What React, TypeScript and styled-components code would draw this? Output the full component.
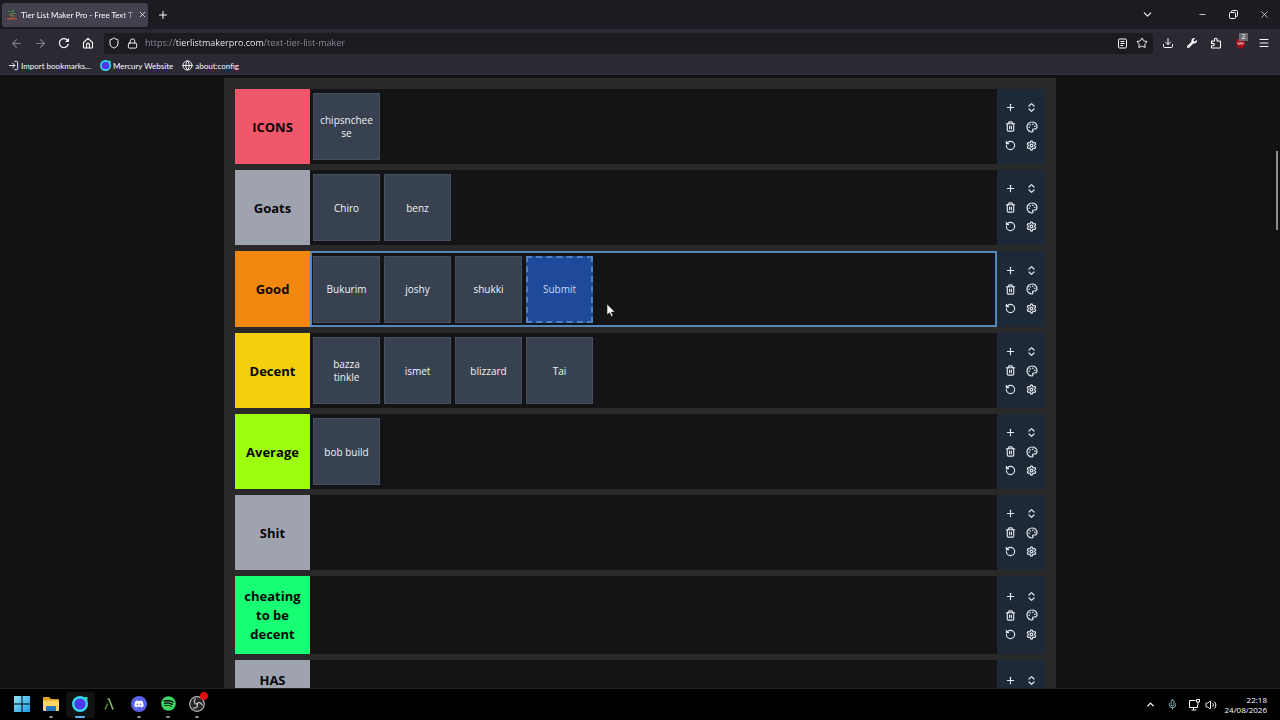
import React from "react";
import styled, { createGlobalStyle, css } from "styled-components";
import {
  ArrowLeft, ArrowRight, ChevronDown, ChevronUp, Download, Globe, LogIn, Lock, Menu,
  Mic, Minus, Palette, Plus, RotateCcw, Settings, Shield, Star, Trash2, Volume2, X,
} from "lucide-react";
import { FaDiscord, FaSpotify, FaWrench } from "react-icons/fa";

const pageFont = `"Open Sans", "Noto Sans", sans-serif`;
const chromeFont = `Lato, "Open Sans", sans-serif`;

const GlobalStyle = createGlobalStyle`
  * { box-sizing: border-box; }
  body { margin: 0; background: #111112; font-family: ${pageFont}; color: #fbfbfe; }
  button { font: inherit; color: inherit; background: none; border: 0; padding: 0; cursor: pointer; }
  svg { display: block; flex: none; }
`;

const Desktop = styled.div`
  height: 100vh;
  display: flex;
  flex-direction: column;
  overflow: hidden;
`;

const TabBar = styled.header`
  display: flex;
  align-items: center;
  height: 29px;
  padding-left: 2px;
  background: #1c1b22;
  flex: none;
`;

const Tab = styled.div`
  display: flex;
  align-items: center;
  gap: 4px;
  width: 146px;
  height: 24px;
  padding: 0 4px 0 5px;
  background: #42414d;
  border-radius: 3px;
`;

const TabTitle = styled.span`
  flex: 1;
  white-space: nowrap;
  font-family: ${chromeFont};
  font-size: 8px;
  line-height: 14px;
  mask-image: linear-gradient(90deg, #000 90%, transparent 106%);
`;

const IconButton = styled.button<{ $w?: number; $dim?: boolean }>`
  position: relative;
  display: flex;
  align-items: center;
  justify-content: center;
  width: ${(p) => p.$w ?? 24}px;
  height: 20px;
  flex: none;
  opacity: ${(p) => (p.$dim ? 0.4 : 1)};
`;

const WindowActions = styled.div`
  display: flex;
  margin-left: auto;
`;

const WindowButtons = styled.div`
  display: flex;
  margin-left: 25px;
`;

const NavBar = styled.nav`
  display: flex;
  align-items: center;
  height: 28px;
  padding: 0 4px;
  background: #2b2a33;
  flex: none;
`;

const AddressField = styled.label`
  flex: 1;
  min-width: 0;
  display: flex;
  align-items: center;
  gap: 7px;
  height: 21px;
  margin: 0 3px 0 4px;
  padding: 0 0 0 4px;
  background: #1c1b22;
  border-radius: 3px;
`;

const AddressInput = styled.input`
  flex: 1;
  min-width: 0;
  border: 0;
  outline: 0;
  padding: 0;
  font-family: ${pageFont};
  font-size: 9px;
  line-height: 16px;
  color: transparent;
  background: linear-gradient(90deg, #8f8f98 30px, #fbfbfe 30px 119px, #8f8f98 119px);
  background-clip: text;
  -webkit-background-clip: text;
`;

const FieldButtons = styled.div`
  display: flex;
`;

const Bookmarks = styled.div`
  display: flex;
  align-items: center;
  gap: 9px;
  height: 18px;
  padding: 0 8px;
  background: #2b2a33;
  border-bottom: 1px solid #33323c;
  flex: none;
`;

const Bookmark = styled.a`
  display: flex;
  align-items: center;
  gap: 2px;
  color: #fbfbfe;
  text-decoration: none;
  font-family: ${chromeFont};
  font-size: 8px;
  line-height: 14px;
`;

const Badge = styled.span`
  position: absolute;
  top: 0;
  right: 4px;
  width: 9px;
  height: 8px;
  background: #6c6c72;
  font-size: 7px;
  line-height: 8px;
`;

const Viewport = styled.main`
  position: relative;
  flex: 1;
  min-height: 0;
  overflow: hidden;
  padding-top: 3px;
  background: #111112;
`;

const ScrollThumb = styled.div`
  position: absolute;
  top: 76px;
  right: 2px;
  width: 2px;
  height: 79px;
  background: #8c8c8e;
`;

const Board = styled.section`
  display: flex;
  flex-direction: column;
  gap: 6px;
  max-width: 832px;
  margin: 0 auto;
  padding: 11px;
  background: #29292a;
`;

const TierRow = styled.div<{ $active?: boolean; $tall?: boolean }>`
  display: grid;
  grid-template-columns: 75px 1fr 48px;
  min-height: ${(p) => (p.$tall ? 78 : p.$active ? 76 : 75)}px;
`;

const TierLabel = styled.h2<{ $color: string; $top?: boolean }>`
  display: flex;
  align-items: ${(p) => (p.$top ? "flex-start" : "center")};
  justify-content: center;
  margin: 0;
  padding: 11px 8px 10px;
  background: ${(p) => p.$color};
  color: #060607;
  font-size: 13px;
  font-weight: 700;
  line-height: 19px;
  text-align: center;
`;

const DropZone = styled.div<{ $active?: boolean }>`
  display: flex;
  flex-wrap: wrap;
  align-content: center;
  gap: 4px;
  padding: 0 3px;
  background: #141416;
  ${(p) => p.$active && css`box-shadow: inset 0 0 0 2px #5488bd;`}
`;

const Tile = styled.div<{ $dragging?: boolean }>`
  position: relative;
  display: flex;
  align-items: center;
  justify-content: center;
  width: 67px;
  height: 67px;
  padding: 1px 6px 0;
  border: 1px solid #454f5d;
  background: #38414f;
  color: #f1f3f6;
  font-size: 10px;
  line-height: 13px;
  text-align: center;
  word-break: break-word;
  ${(p) => p.$dragging && css`
    border: 2px dashed #4f83c0;
    background: #1f499b;
    color: #c8d6ee;
  `}
`;

const Controls = styled.div`
  display: grid;
  grid-template-columns: 21px 21px;
  grid-auto-rows: 19px;
  align-content: center;
  padding-left: 3px;
  background: #1e2938;
  color: #e5e9ef;
`;

const ControlButton = styled.button`
  display: flex;
  align-items: center;
  justify-content: center;
`;

const Pointer = styled.svg`
  position: absolute;
  left: 78px;
  top: 45px;
`;

const Taskbar = styled.footer`
  display: flex;
  align-items: center;
  height: 32px;
  padding: 0 13px 0 7px;
  background: #000;
  border-top: 1px solid #202020;
  flex: none;
`;

const Apps = styled.div`
  display: grid;
  grid-template-columns: repeat(7, 1fr);
  width: 205px;
`;

const TaskButton = styled.button<{ $state?: "open" | "active" }>`
  position: relative;
  display: flex;
  align-items: center;
  justify-content: center;
  height: 26px;
  padding-bottom: 2px;
  border-radius: 3px;
  background: ${(p) => (p.$state === "active" ? "#101214" : "transparent")};
  &::after {
    content: "";
    position: absolute;
    bottom: 0;
    left: calc(50% - ${(p) => (p.$state === "active" ? 5 : 2)}px);
    width: ${(p) => (p.$state === "active" ? 10 : 4)}px;
    height: 2px;
    border-radius: 1px;
    background: ${(p) => (!p.$state ? "transparent" : p.$state === "active" ? "#5cb8e8" : "#8b8b8b")};
  }
`;

const RecordDot = styled.span`
  position: absolute;
  top: 0;
  right: 4px;
  width: 8px;
  height: 8px;
  border-radius: 50%;
  background: #e00b0b;
`;

const Tray = styled.div`
  display: flex;
  align-items: center;
  margin-left: auto;
`;

const Clock = styled.time`
  margin-left: 7px;
  font-size: 8px;
  line-height: 10px;
  text-align: right;
`;

const MercuryLogo = ({ size }: { size: number }) => (
  <svg width={size} height={size} viewBox="0 0 16 16">
    <circle cx="8" cy="8" r="8" fill="#35d6ee" />
    <path d="M12 1h3.500v4z" fill="#23e2b4" />
    <circle cx="8" cy="8" r="5.600" fill="#5038ea" />
  </svg>
);

const SiteIcon = () => (
  <svg width="10" height="10" viewBox="0 0 10 10">
    <path d="M1 1h3v1H1zM5 0h2v2H5zM3 3h6v1H3z" fill="#3a8a4c" />
    <path d="M2 4.500h4v1H2zM5 5.500h3v1H5z" fill="#9a7437" />
    <path d="M0 8h3l1-1 2 1h4v1.500H0z" fill="#b0502f" />
  </svg>
);

const Reload = () => (
  <svg width="12" height="12" viewBox="0 0 12 12" fill="none" stroke="currentColor" strokeWidth="1.200">
    <path d="M10.300 7A4.500 4.500 0 1 1 9 2.800L10.500 4.300" />
    <path d="M11 1v4H7z" fill="currentColor" stroke="none" />
  </svg>
);

const Home = () => (
  <svg width="12" height="12" viewBox="0 0 12 12" fill="none" stroke="currentColor" strokeWidth="1.100" strokeLinejoin="round">
    <path d="M1.500 5.500 6 1.300l4.500 4.200v4.700a.8.8 0 0 1-.8.800H2.300a.8.800 0 0 1-.8-.8z" />
    <path d="M4.600 11V7.500a1.400 1.400 0 0 1 2.800 0V11" />
  </svg>
);

const Reader = () => (
  <svg width="11" height="11" viewBox="0 0 11 11" fill="none" stroke="currentColor">
    <rect x="1.500" y="1" width="8" height="9" rx="1.200" />
    <path d="M3.500 3.500h4M3.500 5.500h4M3.500 7.500h2.500" />
  </svg>
);

const Puzzle = () => (
  <svg width="12" height="12" viewBox="0 0 12 12" fill="none" stroke="currentColor" strokeWidth="1.100" strokeLinejoin="round">
    <path d="M1.500 4h3V2.500a1.300 1.300 0 0 1 2.600 0V4h2.900a.5.500 0 0 1 .5.500V10.500a.5.500 0 0 1-.5.500H2a.5.500 0 0 1-.5-.5V8.800h1.600a1.200 1.200 0 0 0 0-2.400H1.500z" />
  </svg>
);

const UBlock = () => (
  <svg width="11" height="11" viewBox="0 0 11 11">
    <path d="M5.500 0 10 1.500v4c0 2.500-2 4.300-4.500 5.500C3 9.800 1 8 1 5.500v-4z" fill="#a30d1a" />
    <path d="M3 4v2.200h2V4M6 4v2.200h2V4" fill="none" stroke="#f1c9cc" strokeWidth=".8" />
  </svg>
);

const Restore = () => (
  <svg width="9" height="9" viewBox="0 0 9 9" fill="none" stroke="currentColor">
    <rect x=".5" y="2.500" width="6" height="6" rx="1" />
    <path d="M2.500 2V1.500a1 1 0 0 1 1-1h4a1 1 0 0 1 1 1v4a1 1 0 0 1-1 1H7" />
  </svg>
);

const UpDown = () => (
  <svg width="11" height="11" viewBox="0 0 11 11" fill="none" stroke="currentColor" strokeWidth="1.200" strokeLinecap="round" strokeLinejoin="round">
    <path d="M3 4 5.500 1.600 8 4M3 7l2.500 2.400L8 7" />
  </svg>
);

const WindowsLogo = () => (
  <svg width="16" height="16" viewBox="0 0 16 16">
    <defs>
      <linearGradient id="win" x1="0" y1="0" x2="1" y2="1">
        <stop offset="0" stopColor="#8fe3fb" />
        <stop offset="1" stopColor="#1d9be4" />
      </linearGradient>
    </defs>
    <path d="M0 0h7.500v7.500H0zM8.500 0H16v7.500H8.500zM0 8.500h7.500V16H0zM8.500 8.500H16V16H8.500z" fill="url(#win)" />
  </svg>
);

const FolderLogo = () => (
  <svg width="18" height="16" viewBox="0 0 18 16">
    <path d="M1 2a1 1 0 0 1 1-1h5l2 2h7a1 1 0 0 1 1 1v10H1z" fill="#e3a420" />
    <path d="M1 4.500h16V14a1 1 0 0 1-1 1H2a1 1 0 0 1-1-1z" fill="#fbd664" />
    <path d="M4 15v-4a1 1 0 0 1 1-1h8a1 1 0 0 1 1 1v4z" fill="#1f7ac4" />
  </svg>
);

const LambdaLogo = () => (
  <svg width="14" height="14" viewBox="0 0 14 14" fill="none" stroke="#83b866" strokeWidth="1.600">
    <path d="M5.500 2h1.500l4 10.500" />
    <path d="M5.600 6.500 3 12.500" stroke="#55843d" />
  </svg>
);

const ObsLogo = () => (
  <svg width="16" height="16" viewBox="0 0 16 16" fill="none">
    <circle cx="8" cy="8" r="7.300" fill="#252427" stroke="#b9b9bb" strokeWidth="1.200" />
    <g stroke="#b9b9bb" strokeWidth="1.300" strokeLinecap="round">
      <path d="M8 8.200C5.200 8 4.400 5.200 6.300 3" />
      <path d="M8 8.200C5.200 8 4.400 5.200 6.300 3" transform="rotate(120 8 8)" />
      <path d="M8 8.200C5.200 8 4.400 5.200 6.300 3" transform="rotate(240 8 8)" />
    </g>
  </svg>
);

const MonitorIcon = () => (
  <svg width="12" height="12" viewBox="0 0 12 12" fill="none" stroke="currentColor">
    <path d="M7.500 1.500h-6v7h8V6M3.500 11h5M5.500 8.500V11" />
    <path d="M8.500.5h3V3h-3zM10 3v3" />
  </svg>
);

type Tier = { name: string; color: string; items: string[]; active?: boolean; tall?: boolean };

const tiers: Tier[] = [
  { name: "ICONS", color: "#f1576b", items: ["chipsncheese"] },
  { name: "Goats", color: "#9fa3b0", items: ["Chiro", "benz"] },
  { name: "Good", color: "#f2880f", items: ["Bukurim", "joshy", "shukki", "Submit"], active: true },
  { name: "Decent", color: "#f4d00c", items: ["bazza tinkle", "ismet", "blizzard", "Tai"] },
  { name: "Average", color: "#9dff0d", items: ["bob build"] },
  { name: "Shit", color: "#9fa3b0", items: [] },
  { name: "cheating to be decent", color: "#17ff73", items: [] },
  { name: "HAS", color: "#9fa3b0", items: [], tall: true },
];

const actions = [
  { label: "Add row", icon: <Plus size={11} strokeWidth={2.4} /> },
  { label: "Move row", icon: <UpDown /> },
  { label: "Delete row", icon: <Trash2 size={11} strokeWidth={2.5} /> },
  { label: "Row colour", icon: <Palette size={12} strokeWidth={2.4} /> },
  { label: "Reset row", icon: <RotateCcw size={11} strokeWidth={2.5} /> },
  { label: "Row settings", icon: <Settings size={11} strokeWidth={2.6} /> },
];

export default function App() {
  return (
    <Desktop>
      <GlobalStyle />
      <TabBar>
        <Tab>
          <SiteIcon />
          <TabTitle>Tier List Maker Pro - Free Text T</TabTitle>
          <IconButton $w={12} aria-label="Close tab"><X size={9} /></IconButton>
        </Tab>
        <IconButton $w={30} aria-label="New tab"><Plus size={12} /></IconButton>
        <WindowActions>
          <IconButton $w={30} aria-label="List tabs"><ChevronDown size={13} /></IconButton>
          <WindowButtons>
            <IconButton $w={31} aria-label="Minimize"><Minus size={9} /></IconButton>
            <IconButton $w={31} aria-label="Restore"><Restore /></IconButton>
            <IconButton $w={31} aria-label="Close window"><X size={11} strokeWidth={1.5} /></IconButton>
          </WindowButtons>
        </WindowActions>
      </TabBar>
      <NavBar>
        <IconButton aria-label="Back" $dim><ArrowLeft size={13} /></IconButton>
        <IconButton aria-label="Forward" $dim><ArrowRight size={13} /></IconButton>
        <IconButton aria-label="Reload"><Reload /></IconButton>
        <IconButton aria-label="Home"><Home /></IconButton>
        <AddressField>
          <Shield size={12} />
          <Lock size={11} />
          <AddressInput aria-label="Address" type="text" defaultValue="https://tierlistmakerpro.com/text-tier-list-maker" />
          <FieldButtons>
            <IconButton $w={18} aria-label="Reader view"><Reader /></IconButton>
            <IconButton $w={22} aria-label="Bookmark"><Star size={12} /></IconButton>
          </FieldButtons>
        </AddressField>
        <IconButton aria-label="Downloads"><Download size={12} /></IconButton>
        <IconButton aria-label="Tools"><FaWrench size={10} /></IconButton>
        <IconButton aria-label="Extensions"><Puzzle /></IconButton>
        <IconButton aria-label="Content blocker"><UBlock /><Badge>2</Badge></IconButton>
        <IconButton aria-label="Menu"><Menu size={12} /></IconButton>
      </NavBar>
      <Bookmarks>
        <Bookmark href="#import"><LogIn size={11} />Import bookmarks...</Bookmark>
        <Bookmark href="#mercury"><MercuryLogo size={11} />Mercury Website</Bookmark>
        <Bookmark href="#config"><Globe size={11} />about:config</Bookmark>
      </Bookmarks>
      <Viewport>
        <Board>
          {tiers.map((tier) => (
            <TierRow key={tier.name} $active={tier.active} $tall={tier.tall}>
              <TierLabel $color={tier.color} $top={tier.tall}>{tier.name}</TierLabel>
              <DropZone $active={tier.active}>
                {tier.items.map((item) => (
                  <Tile key={item} $dragging={item === "Submit"}>
                    {item}
                    {item === "Submit" && (
                      <Pointer width="10" height="15" viewBox="0 0 10 15">
                        <path d="M1 1v11l2.600-2.300 1.700 3.800 1.700-.8-1.700-3.600H9z" fill="#fff" stroke="#111" strokeWidth=".6" />
                      </Pointer>
                    )}
                  </Tile>
                ))}
              </DropZone>
              <Controls>
                {actions.map(({ label, icon }) => (
                  <ControlButton key={label} aria-label={label}>{icon}</ControlButton>
                ))}
              </Controls>
            </TierRow>
          ))}
        </Board>
        <ScrollThumb />
      </Viewport>
      <Taskbar>
        <Apps>
          <TaskButton aria-label="Start"><WindowsLogo /></TaskButton>
          <TaskButton aria-label="File Explorer" $state="open"><FolderLogo /></TaskButton>
          <TaskButton aria-label="Mercury" $state="active"><MercuryLogo size={16} /></TaskButton>
          <TaskButton aria-label="Lambda"><LambdaLogo /></TaskButton>
          <TaskButton aria-label="Discord" $state="open">
            <svg width="16" height="16" viewBox="0 0 16 16">
              <circle cx="8" cy="8" r="8" fill="#5a62ea" />
              <FaDiscord x="3" y="3" size={10} color="#fff" />
            </svg>
          </TaskButton>
          <TaskButton aria-label="Spotify" $state="open"><FaSpotify size={15} color="#3ad865" /></TaskButton>
          <TaskButton aria-label="OBS Studio" $state="open"><ObsLogo /><RecordDot /></TaskButton>
        </Apps>
        <Tray>
          <IconButton $w={22} aria-label="Hidden icons"><ChevronUp size={11} strokeWidth={3} /></IconButton>
          <IconButton $w={22} aria-label="Microphone"><Mic size={11} color="#8fbfc0" /></IconButton>
          <IconButton $w={20} aria-label="Network"><MonitorIcon /></IconButton>
          <IconButton $w={14} aria-label="Volume"><Volume2 size={12} /></IconButton>
          <Clock>22:18<br />24/08/2026</Clock>
        </Tray>
      </Taskbar>
    </Desktop>
  );
}
